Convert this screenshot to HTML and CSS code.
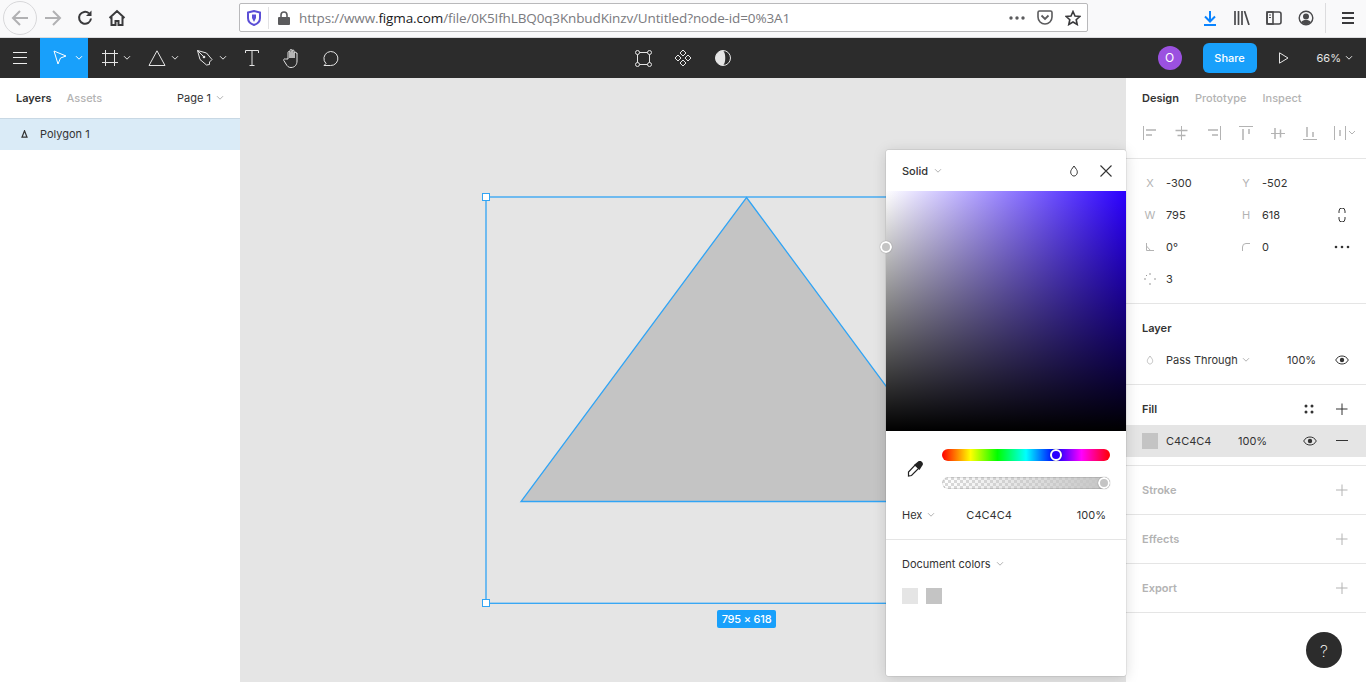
FILE: index.html
```html
<!DOCTYPE html>
<html lang="en">

<head>
    <meta charset="UTF-8">
    <title>Untitled - Figma</title>
    <link rel="stylesheet" href="styles.css">
</head>

<body>
    <svg class="defs" width="0" height="0">
        <symbol id="chev" viewBox="0 0 8 6"><path d="M1 1.200 4 4.200 7 1.200" fill="none" stroke="currentColor"/></symbol>
        <symbol id="plus" viewBox="0 0 12 12"><path d="M6.500 0V12M0 5.500H12" fill="none" stroke="currentColor" transform="translate(-.5 .5)"/></symbol>
        <symbol id="eye" viewBox="0 0 14 10"><path d="M.7 5C2.200 2.200 4.400 1 7 1s4.800 1.200 6.300 4C11.800 7.800 9.600 9 7 9S2.200 7.800.7 5Z" fill="none" stroke="currentColor"/><circle cx="7" cy="5" r="2.200" fill="currentColor"/></symbol>
        <symbol id="drop" viewBox="0 0 10 12"><path d="M5 1 7.500 4.500C9.500 7.500 7.500 11 5 11S.5 7.500 2.500 4.500Z" fill="none" stroke="currentColor"/></symbol>
    </svg>

    <!-- browser chrome -->
    <div class="browser-bar">
        <div class="nav-back">
            <svg width="20" height="20" viewBox="0 0 20 20"><path d="M18 10H3M10 3 3 10 10 17" fill="none" stroke="#b1b1b3" stroke-width="2"/></svg>
        </div>
        <div class="nav-btn">
            <svg width="20" height="20" viewBox="0 0 20 20"><path d="M2 10H17M10 3 17 10 10 17" fill="none" stroke="#b1b1b3" stroke-width="2"/></svg>
        </div>
        <div class="nav-btn">
            <svg width="18" height="18" viewBox="0 0 18 18"><path d="M15 9.500A6 6 0 1 1 13 4.300" fill="none" stroke="#3a3a3c" stroke-width="2"/><path d="M15.500 1.500V7H10Z" fill="#3a3a3c"/></svg>
        </div>
        <div class="nav-btn">
            <svg width="18" height="18" viewBox="0 0 18 18"><path d="M1.500 9 9 2l7.500 7M3.500 8v8h4v-4h3v4h4V8" fill="none" stroke="#3a3a3c" stroke-width="2"/></svg>
        </div>

        <div class="url-bar">
            <svg class="url-shield" width="14" height="16" viewBox="0 0 14 16"><path d="M1 2.500 7 1l6 1.500V8c0 3.500-3 6-6 7-3-1-6-3.500-6-7Z" fill="#fff" stroke="#5b4fd6" stroke-width="2"/><path d="M5 4.500H9V8L7 12 5 8Z" fill="#5b4fd6"/></svg>
            <span class="url-sep"></span>
            <svg class="url-lock" width="12" height="14" viewBox="0 0 12 14"><path d="M3 6V4a3 3 0 0 1 6 0v2" fill="none" stroke="#5b5b5d" stroke-width="1.600"/><rect y="6" width="12" height="8" rx="1" fill="#5b5b5d"/></svg>
            <span class="url-text">https://www.<b>figma.com</b>/file/0K5IfhLBQ0q3KnbudKinzv/Untitled?node-id=0%3A1</span>
            <svg class="url-icon" width="16" height="4" viewBox="0 0 16 4"><circle cx="2" cy="2" r="1.700" fill="#5b5b5d"/><circle cx="8" cy="2" r="1.700" fill="#5b5b5d"/><circle cx="14" cy="2" r="1.700" fill="#5b5b5d"/></svg>
            <svg class="url-icon" width="16" height="15" viewBox="0 0 16 15"><path d="M1 2.500C1 1.500 1.500 1 2.500 1h11c1 0 1.500.5 1.500 1.500V7a7 7 0 0 1-14 0Z" fill="none" stroke="#5b5b5d" stroke-width="1.600"/><path d="M4.500 5.500 8 9l3.500-3.500" fill="none" stroke="#5b5b5d" stroke-width="1.800"/></svg>
            <svg class="url-icon" width="16" height="16" viewBox="0 0 16 16"><path d="M8 1.500 10 6l4.800.5-3.600 3.200 1 4.800L8 12l-4.200 2.500 1-4.800L1.200 6.500 6 6Z" fill="none" stroke="#3a3a3c" stroke-width="1.600"/></svg>
        </div>

        <div class="browser-right">
            <div class="nav-btn">
                <svg width="16" height="16" viewBox="0 0 16 16"><path d="M8 1V11M3 6.500 8 11.500 13 6.500M2 15H14" fill="none" stroke="#0a84ff" stroke-width="2"/></svg>
            </div>
            <div class="nav-btn">
                <svg width="16" height="14" viewBox="0 0 16 14"><path d="M1 0V14M4.500 0V14M8 0V14M10.500 0 15 14" fill="none" stroke="#4a4a4c" stroke-width="1.700"/></svg>
            </div>
            <div class="nav-btn">
                <svg width="16" height="14" viewBox="0 0 16 14"><rect x="1" y="1" width="14" height="12" rx="2" fill="none" stroke="#4a4a4c" stroke-width="1.600"/><rect x="1" y="1" width="6" height="12" fill="none" stroke="#4a4a4c" stroke-width="1.600"/><path d="M3 4H5M3 6.500H5" stroke="#4a4a4c"/></svg>
            </div>
            <div class="nav-btn">
                <svg width="16" height="16" viewBox="0 0 16 16"><circle cx="8" cy="8" r="6.800" fill="none" stroke="#4a4a4c" stroke-width="1.400"/><circle cx="8" cy="6.500" r="3" fill="#4a4a4c"/><path d="M3 12.500C4 10.500 6 10 8 10s4 .5 5 2.500L8 15Z" fill="#4a4a4c"/></svg>
            </div>
            <span class="browser-sep"></span>
            <div class="nav-btn">
                <svg width="14" height="12" viewBox="0 0 14 12"><path d="M1 1H13M1 6H13M1 11H13" stroke="#3a3a3c" stroke-width="2"/></svg>
            </div>
        </div>
    </div>

    <!-- figma toolbar -->
    <div class="toolbar">
        <div class="tool-group">
            <div class="tool tool-menu">
                <svg width="14" height="12" viewBox="0 0 14 12"><path d="M0 .5H14M0 5.500H14M0 11.500H14" stroke="#eee"/></svg>
            </div>
            <div class="tool tool-wide tool-active">
                <svg width="18" height="18" viewBox="-1 -1 18 18"><path d="M1 1 13 6 7.500 8 5 14Z" fill="none" stroke="#fff"/></svg>
                <svg class="chev" width="8" height="6"><use href="#chev"/></svg>
            </div>
            <div class="tool tool-wide">
                <svg width="18" height="18" viewBox="-2 -1 18 18"><path d="M3.500 0V16M12.500 0V16M0 3.500H16M0 12.500H16" stroke="#e5e5e5" fill="none"/></svg>
                <svg class="chev" width="8" height="6"><use href="#chev"/></svg>
            </div>
            <div class="tool tool-wide">
                <svg width="18" height="18" viewBox="0 -1 18 18"><path d="M9 .8 17 15.500H1Z" fill="none" stroke="#e5e5e5"/></svg>
                <svg class="chev" width="8" height="6"><use href="#chev"/></svg>
            </div>
            <div class="tool tool-wide">
                <svg width="18" height="18" viewBox="-.5 -.5 18 18"><path d="M1 1 10 3.500 15.500 10 13 12.500 13 15 10 15.500 3.500 10Z" fill="none" stroke="#e5e5e5"/><circle cx="7.500" cy="7.500" r="1.300" fill="#e5e5e5"/><path d="M1 1 7 7" stroke="#e5e5e5"/></svg>
                <svg class="chev" width="8" height="6"><use href="#chev"/></svg>
            </div>
            <div class="tool">
                <svg width="14" height="16" viewBox="0 0 14 16"><path d="M.5 3V.5H13.500V3M7 .5V15.500M4.500 15.500H9.500" fill="none" stroke="#e5e5e5"/></svg>
            </div>
            <div class="tool">
                <svg width="18" height="20" viewBox="0 0 18 20"><path d="M5 11V4.500a1 1 0 0 1 2 0V10 2.500a1 1 0 0 1 2 0V10 3a1 1 0 0 1 2 0v7V5a1 1 0 0 1 2 0l1 0v8c0 3.500-2 6.500-6 6.500-2.500 0-3.500-1-5-3.500L.8 12.500c-.5-1 .7-2.200 1.700-1.500Z" fill="none" stroke="#e5e5e5"/></svg>
            </div>
            <div class="tool">
                <svg width="18" height="16" viewBox="0 0 18 16"><path d="M1 15.500H7.500A7 7 0 1 0 3 13.500Z" fill="none" stroke="#e5e5e5"/></svg>
            </div>
        </div>

        <div class="tool-group">
            <div class="tool">
                <svg width="17" height="17" viewBox="0 0 17 17"><rect x="2.500" y="2.500" width="12" height="12" fill="none" stroke="#e5e5e5"/><g fill="#2c2c2c" stroke="#e5e5e5"><circle cx="2.500" cy="2.500" r="2"/><circle cx="14.500" cy="2.500" r="2"/><circle cx="2.500" cy="14.500" r="2"/><circle cx="14.500" cy="14.500" r="2"/></g></svg>
            </div>
            <div class="tool">
                <svg width="18" height="18" viewBox="0 0 18 18"><g fill="none" stroke="#e5e5e5"><path d="M9 1 12 4 9 7 6 4Z"/><path d="M9 11 12 14 9 17 6 14Z"/><path d="M4 6 7 9 4 12 1 9Z"/><path d="M14 6 17 9 14 12 11 9Z"/></g></svg>
            </div>
            <div class="tool">
                <svg width="16" height="16" viewBox="0 0 16 16"><circle cx="8" cy="8" r="7.500" fill="none" stroke="#e5e5e5"/><path d="M8 .5A7.500 7.500 0 0 0 8 15.500C11 13 11 3 8 .5Z" fill="#e5e5e5"/></svg>
            </div>
        </div>

        <div class="tool-group tool-right">
            <span class="avatar">O</span>
            <span class="share">Share</span>
            <svg class="play" width="10" height="12" viewBox="0 0 10 12"><path d="M.5 .8 9 6 .5 11.200Z" fill="none" stroke="#e5e5e5"/></svg>
            <span class="zoom-level">66%</span>
            <svg class="chev" width="8" height="6"><use href="#chev"/></svg>
        </div>
    </div>

    <div class="workspace">
        <!-- layers -->
        <aside class="left-panel">
            <div class="left-tabs">
                <span class="tab tab-on">Layers</span>
                <span class="tab">Assets</span>
                <span class="page-name">Page 1</span>
                <svg class="chev-dim" width="8" height="6"><use href="#chev"/></svg>
            </div>
            <div class="layer-row">
                <svg width="7" height="8" viewBox="0 0 7 8"><path d="M3.500 .8 6 7.200H1Z" fill="none" stroke="#333" stroke-width="1.200"/></svg>
                <span>Polygon 1</span>
            </div>
        </aside>

        <!-- canvas -->
        <main class="canvas">
            <svg class="drawing" width="886" height="604" viewBox="240 78 886 604">
                <path d="M746.500 197.500 971.500 501.500H521Z" fill="#c4c4c4" stroke="#30a4f5" stroke-width="1.300"/>
                <rect x="486" y="197" width="525" height="406.300" fill="none" stroke="#30a4f5" stroke-width="1.300"/>
                <rect x="482.500" y="193.500" width="7" height="7" fill="#fff" stroke="#30a4f5"/>
                <rect x="482.500" y="599.500" width="7" height="7" fill="#fff" stroke="#30a4f5"/>
            </svg>
            <span class="size-label">795 × 618</span>
        </main>

        <!-- design panel -->
        <aside class="right-panel">
            <div class="right-head">
                <div class="right-tabs">
                    <span class="tab tab-on">Design</span>
                    <span class="tab">Prototype</span>
                    <span class="tab">Inspect</span>
                </div>
                <div class="align-row">
                    <svg width="14" height="14" viewBox="0 0 14 14"><path d="M.5 0V14" stroke="#b3b3b3"/><path d="M3 4H13M3 9H9" stroke="#b3b3b3" stroke-width="1.500"/></svg>
                    <svg width="14" height="14" viewBox="0 0 14 14"><path d="M6.500 0V14" stroke="#b3b3b3"/><path d="M.5 4.500H12.500M2.500 9.500H10.500" stroke="#b3b3b3" stroke-width="1.500"/></svg>
                    <svg width="14" height="14" viewBox="0 0 14 14"><path d="M13.500 0V14" stroke="#b3b3b3"/><path d="M1 4H11M5 9H11" stroke="#b3b3b3" stroke-width="1.500"/></svg>
                    <svg width="14" height="14" viewBox="0 0 14 14"><path d="M0 .5H14" stroke="#b3b3b3"/><path d="M4 3V14M10 3V8" stroke="#b3b3b3" stroke-width="1.500"/></svg>
                    <svg width="14" height="14" viewBox="0 0 14 14"><path d="M0 7.500H14" stroke="#b3b3b3"/><path d="M4 2V13M9.500 3.500V11.500" stroke="#b3b3b3" stroke-width="1.500"/></svg>
                    <svg width="14" height="14" viewBox="0 0 14 14"><path d="M0 13.500H14" stroke="#b3b3b3"/><path d="M4 1V11M10 6V11" stroke="#b3b3b3" stroke-width="1.500"/></svg>
                    <svg class="align-last" width="22" height="14" viewBox="0 0 22 14"><path d="M.5 0V14M11.500 0V14" stroke="#b3b3b3" fill="none"/><path d="M6 4V10" stroke="#b3b3b3" stroke-width="1.500"/><path d="M15 5 18 8 21 5" stroke="#b3b3b3" fill="none"/></svg>
                </div>
            </div>

            <section class="props">
                <div class="prop-row">
                    <span class="prop-label">X</span><span>-300</span>
                    <span class="prop-label">Y</span><span>-502</span>
                </div>
                <div class="prop-row">
                    <span class="prop-label">W</span><span>795</span>
                    <span class="prop-label">H</span><span>618</span>
                    <svg class="prop-end" width="8" height="14" viewBox="0 0 8 14"><path d="M1 5V3a3 3 0 0 1 6 0v2M1 9v2a3 3 0 0 0 6 0V9" fill="none" stroke="#333"/></svg>
                </div>
                <div class="prop-row">
                    <svg class="prop-label" width="8" height="8" viewBox="0 0 8 8"><path d="M.5 0V7.500H8M.5 3 4.500 7.500" fill="none" stroke="#b3b3b3"/></svg><span>0°</span>
                    <svg class="prop-label" width="8" height="8" viewBox="0 0 8 8"><path d="M.5 8V4A3.500 3.500 0 0 1 4 .5H8" fill="none" stroke="#b3b3b3"/></svg><span>0</span>
                    <svg class="prop-end" width="16" height="4" viewBox="0 0 16 4"><circle cx="2" cy="2" r="1.300" fill="#333"/><circle cx="8" cy="2" r="1.300" fill="#333"/><circle cx="14" cy="2" r="1.300" fill="#333"/></svg>
                </div>
                <div class="prop-row">
                    <svg class="prop-label" width="12" height="12" viewBox="0 0 12 12"><g fill="#999"><rect x="5.500" y="0" width="1" height="2"/><rect x="5.500" y="10" width="1" height="2"/><rect x="0" y="5.500" width="2" height="1"/><rect x="10" y="5.500" width="2" height="1"/><rect x="2" y="2" width="1" height="1"/></g></svg><span>3</span>
                </div>
            </section>

            <section class="section">
                <div class="section-head"><span class="section-title">Layer</span></div>
                <div class="item-row">
                    <svg class="item-icon" width="8" height="10"><use href="#drop"/></svg>
                    <span class="blend">Pass Through</span>
                    <svg class="chev-dim" width="8" height="6"><use href="#chev"/></svg>
                    <span class="layer-opacity">100%</span>
                    <svg class="item-eye" width="14" height="10"><use href="#eye"/></svg>
                </div>
            </section>

            <section class="section">
                <div class="section-head">
                    <span class="section-title">Fill</span>
                    <svg class="head-styles" width="10" height="10" viewBox="0 0 10 10"><g fill="#333"><circle cx="2" cy="2" r="1.500"/><circle cx="8" cy="2" r="1.500"/><circle cx="2" cy="8" r="1.500"/><circle cx="8" cy="8" r="1.500"/></g></svg>
                    <svg class="head-plus" width="12" height="12"><use href="#plus"/></svg>
                </div>
                <div class="item-row item-row-on">
                    <span class="fill-swatch"></span>
                    <span class="fill-hex">C4C4C4</span>
                    <span class="fill-opacity">100%</span>
                    <svg class="fill-eye" width="14" height="10"><use href="#eye"/></svg>
                    <svg class="fill-minus" width="12" height="2" viewBox="0 0 12 2"><path d="M0 .5H12" stroke="#333"/></svg>
                </div>
            </section>

            <section class="section-empty">
                <span class="section-title">Stroke</span>
                <svg class="head-plus" width="12" height="12"><use href="#plus"/></svg>
            </section>
            <section class="section-empty">
                <span class="section-title">Effects</span>
                <svg class="head-plus" width="12" height="12"><use href="#plus"/></svg>
            </section>
            <section class="section-empty">
                <span class="section-title">Export</span>
                <svg class="head-plus" width="12" height="12"><use href="#plus"/></svg>
            </section>
        </aside>

        <!-- colour picker popup -->
        <div class="picker">
            <div class="picker-head">
                <span class="picker-title">Solid</span>
                <svg class="chev-dim" width="8" height="6"><use href="#chev"/></svg>
                <svg class="picker-drop" width="10" height="12"><use href="#drop"/></svg>
                <svg class="picker-close" width="12" height="12" viewBox="0 0 12 12"><path d="M.5 .5 11.500 11.500M11.500 .5 .5 11.500" stroke="#333" stroke-width="1.100"/></svg>
            </div>
            <div class="color-field"><span class="field-thumb"></span></div>
            <div class="slider-row">
                <svg class="eyedropper" width="16" height="16" viewBox="0 0 16 16"><path d="M8.500 3.500 12 7 4.500 14.500 1.500 15 1.500 11Z" fill="#fff" stroke="#222" stroke-width="1.200"/><path d="M7 4 10.500 1a2.700 2.700 0 0 1 4.500 4L12.500 9Z" fill="#222"/></svg>
                <div class="sliders">
                    <div class="hue"><span class="hue-thumb"></span></div>
                    <div class="alpha"><span class="alpha-thumb"></span></div>
                </div>
            </div>
            <div class="hex-row">
                <span>Hex</span>
                <svg class="chev-dim" width="8" height="6"><use href="#chev"/></svg>
                <span class="hex-value">C4C4C4</span>
                <span class="hex-opacity">100%</span>
            </div>
            <div class="doc-colors">
                <div class="doc-title">
                    <span>Document colors</span>
                    <svg class="chev-dim" width="8" height="6"><use href="#chev"/></svg>
                </div>
                <div class="doc-swatches">
                    <span class="swatch swatch-light"></span>
                    <span class="swatch swatch-mid"></span>
                </div>
            </div>
        </div>

        <span class="help">?</span>
    </div>
</body>

</html>
```

FILE: styles.css
```css
* {
    box-sizing: border-box;
}

html,
body {
    height: 100%;
}

body {
    margin: 0;
    overflow: hidden;
    font-family: Inter, "Liberation Sans", sans-serif;
    font-size: 11px;
    color: #333;
    background: #fff;
}

.defs {
    position: absolute;
}

svg {
    display: block;
    flex: none;
}

/* browser chrome */
.browser-bar {
    display: flex;
    align-items: center;
    height: 38px;
    padding: 0 0 2px 3px;
    background: #f9f9fa;
    border-bottom: 1px solid #dcdcde;
}

.nav-back {
    display: flex;
    align-items: center;
    justify-content: center;
    width: 34px;
    height: 34px;
    border: 1px solid #d8d8da;
    border-radius: 50%;
}

.nav-btn {
    display: flex;
    align-items: center;
    justify-content: center;
    width: 32px;
    height: 32px;
}

.url-bar {
    display: flex;
    align-items: center;
    width: 849px;
    height: 29px;
    margin-left: 106px;
    padding: 0 6px 0 7px;
    background: #fff;
    border: 1px solid #b9b9bb;
    border-radius: 2px;
}

.url-sep {
    width: 1px;
    height: 22px;
    margin: 0 9px 0 7px;
    background: #e2e2e4;
}

.url-lock {
    margin-right: 9px;
}

.url-text {
    flex: 1;
    font-family: "Open Sans", sans-serif;
    font-size: 13.5px;
    letter-spacing: -0.13px;
    color: #7a7a7e;
    white-space: nowrap;
}

.url-text b {
    font-weight: 400;
    color: #1a1a1c;
}

.url-icon {
    margin-left: 12px;
}

.browser-right {
    display: flex;
    align-items: center;
    margin-left: 106px;
}

.browser-sep {
    width: 1px;
    height: 30px;
    margin: 0 6px 0 3px;
    background: #dcdcde;
}

/* figma toolbar */
.toolbar {
    display: grid;
    grid-template-columns: 1fr auto 1fr;
    height: 40px;
    background: #2c2c2c;
    color: #e5e5e5;
}

.tool-group {
    display: flex;
    align-items: center;
}

.tool {
    display: flex;
    align-items: center;
    justify-content: center;
    width: 40px;
    height: 40px;
}

.tool-wide {
    justify-content: space-between;
    width: 48px;
    padding: 0 5px 0 12px;
}

.tool-active {
    background: #18a0fb;
    color: #fff;
}

.tool-right {
    justify-content: flex-end;
    padding-right: 13px;
}

.avatar {
    width: 24px;
    height: 24px;
    margin-right: 21px;
    border-radius: 50%;
    background: #9b51e0;
    color: #fff;
    font-size: 12px;
    line-height: 24px;
    text-align: center;
}

.share {
    width: 54px;
    height: 30px;
    margin-right: 22px;
    border-radius: 6px;
    background: #18a0fb;
    color: #fff;
    font-weight: 500;
    line-height: 30px;
    text-align: center;
}

.play {
    margin-right: 28px;
}

.zoom-level {
    margin-right: 4px;
}

/* main area */
.workspace {
    position: relative;
    display: grid;
    grid-template-columns: 240px 1fr 240px;
    height: calc(100% - 78px);
}

.tab {
    color: #b3b3b3;
    font-weight: 500;
}

.tab-on {
    color: #333;
    font-weight: 600;
}

.chev-dim {
    color: #b3b3b3;
}

.left-panel {
    background: #fff;
}

.left-tabs {
    display: flex;
    align-items: center;
    gap: 15px;
    height: 41px;
    padding: 0 0 1px 16px;
    border-bottom: 1px solid #c8d8e4;
}

.page-name {
    margin-left: auto;
    margin-right: -10px;
}

.left-tabs .chev-dim {
    margin-right: 16px;
}

.layer-row {
    display: flex;
    align-items: center;
    gap: 12px;
    height: 31px;
    padding: 0 0 1px 21px;
    background: #daebf7;
}

.canvas {
    position: relative;
    background: #e5e5e5;
    overflow: hidden;
}

.drawing {
    position: absolute;
    top: 0;
    left: 0;
}

.size-label {
    position: absolute;
    left: 477px;
    top: 532px;
    width: 59px;
    height: 18px;
    border-radius: 2px;
    background: #18a0fb;
    color: #fff;
    font-weight: 500;
    letter-spacing: -0.2px;
    line-height: 18px;
    text-align: center;
    white-space: nowrap;
}

/* design panel */
.right-panel {
    background: #fff;
}

.right-head {
    height: 81px;
    border-bottom: 1px solid #e5e5e5;
}

.right-tabs {
    display: flex;
    align-items: center;
    gap: 16px;
    height: 40px;
    padding-left: 16px;
}

.align-row {
    display: flex;
    align-items: center;
    gap: 18px;
    height: 30px;
    padding-left: 17px;
}

.align-last {
    margin-left: -1px;
}

.props {
    height: 145px;
    padding: 8px 0;
    border-bottom: 1px solid #e5e5e5;
}

.prop-row {
    display: grid;
    grid-template-columns: 16px 64px 16px 64px 16px;
    column-gap: 8px;
    align-items: center;
    height: 32px;
    padding-left: 16px;
}

.prop-label {
    justify-self: center;
    color: #b3b3b3;
}

.prop-end {
    grid-column: 5;
    justify-self: center;
}

.section {
    height: 81px;
    border-bottom: 1px solid #e5e5e5;
}

.section-head {
    display: flex;
    align-items: center;
    height: 40px;
    padding: 7px 18px 0 16px;
    color: #333;
}

.section-title {
    font-weight: 600;
}

.head-styles {
    margin-left: auto;
    margin-right: 22px;
}

.item-row {
    display: flex;
    align-items: center;
    height: 32px;
    padding-left: 20px;
}

.item-row-on {
    padding-left: 16px;
    background: #e5e5e5;
}

.item-icon {
    color: #b3b3b3;
    margin-right: 12px;
}

.blend {
    width: 72px;
    white-space: nowrap;
    margin-right: 4px;
}

.layer-opacity {
    width: 30px;
    margin-left: 37px;
    white-space: nowrap;
}

.item-eye {
    margin-left: 18px;
}

.fill-swatch {
    width: 16px;
    height: 16px;
    margin-right: 8px;
    background: #c4c4c4;
}

.fill-hex {
    width: 72px;
}

.fill-opacity {
    width: 65px;
}

.fill-minus {
    margin-left: 19px;
}

.section-empty {
    display: flex;
    align-items: center;
    justify-content: space-between;
    height: 49px;
    padding: 0 18px 0 16px;
    border-bottom: 1px solid #e5e5e5;
}

.section-empty .section-title {
    color: #b3b3b3;
}

.section-empty .head-plus {
    color: #b3b3b3;
}

/* colour picker */
.picker {
    position: absolute;
    left: 886px;
    top: 72px;
    width: 240px;
    height: 526px;
    background: #fff;
    border-radius: 2px;
    box-shadow: 0 2px 14px rgba(0, 0, 0, 0.15), 0 0 0 0.5px rgba(0, 0, 0, 0.12);
}

.picker-head {
    display: flex;
    align-items: center;
    height: 41px;
    padding: 1px 14px 0 16px;
}

.picker-title {
    font-weight: 500;
    margin-right: 6px;
}

.picker-drop {
    margin-left: auto;
    margin-right: 21px;
}

.color-field {
    position: relative;
    height: 240px;
    background: linear-gradient(to top, #000, rgba(0, 0, 0, 0)), linear-gradient(to right, #fff, #2b00ff);
}

.field-thumb {
    position: absolute;
    left: -6px;
    top: 50px;
    width: 12px;
    height: 12px;
    border: 2px solid #fff;
    border-radius: 50%;
    background: #c4c4c4;
    box-shadow: 0 0 1px rgba(0, 0, 0, 0.5);
}

.slider-row {
    display: flex;
    height: 68px;
    padding-top: 18px;
}

.eyedropper {
    margin: 12px 0 0 21px;
}

.sliders {
    display: flex;
    flex-direction: column;
    gap: 16px;
    width: 168px;
    margin-left: 19px;
}

.hue,
.alpha {
    position: relative;
    height: 12px;
    border-radius: 6px;
}

.hue {
    background: linear-gradient(to right, #f00, #ff0 17%, #0f0 33%, #0ff 50%, #00f 67%, #f0f 83%, #f00);
}

.alpha {
    background:
        linear-gradient(to right, rgba(196, 196, 196, 0), #c4c4c4),
        repeating-conic-gradient(#d9d9d9 0 25%, #fff 0 50%) 0 0 / 6px 6px;
    box-shadow: inset 0 0 0 1px rgba(0, 0, 0, 0.1);
}

.hue-thumb,
.alpha-thumb {
    position: absolute;
    top: 0;
    width: 12px;
    height: 12px;
    border: 2px solid #fff;
    border-radius: 50%;
    box-shadow: 0 0 1px rgba(0, 0, 0, 0.6);
}

.hue-thumb {
    left: 108px;
    background: #2b00ff;
}

.alpha-thumb {
    right: 0;
    background: #c4c4c4;
}

.hex-row {
    display: flex;
    align-items: center;
    gap: 5px;
    height: 41px;
    padding: 0 20px 9px 16px;
    border-bottom: 1px solid #e5e5e5;
}

.hex-value {
    margin-left: 26px;
}

.hex-opacity {
    margin-left: auto;
}

.doc-colors {
    padding: 16px;
}

.doc-title {
    display: flex;
    align-items: center;
    gap: 5px;
    height: 16px;
}

.doc-swatches {
    display: flex;
    gap: 8px;
    margin-top: 16px;
}

.swatch {
    width: 16px;
    height: 16px;
}

.swatch-light {
    background: #e5e5e5;
}

.swatch-mid {
    background: #c4c4c4;
}

.help {
    position: absolute;
    right: 24px;
    bottom: 14px;
    width: 36px;
    height: 36px;
    padding-top: 1px;
    border-radius: 50%;
    background: #2c2c2c;
    color: #fff;
    font-size: 16px;
    font-weight: 200;
    line-height: 36px;
    text-align: center;
}
```
